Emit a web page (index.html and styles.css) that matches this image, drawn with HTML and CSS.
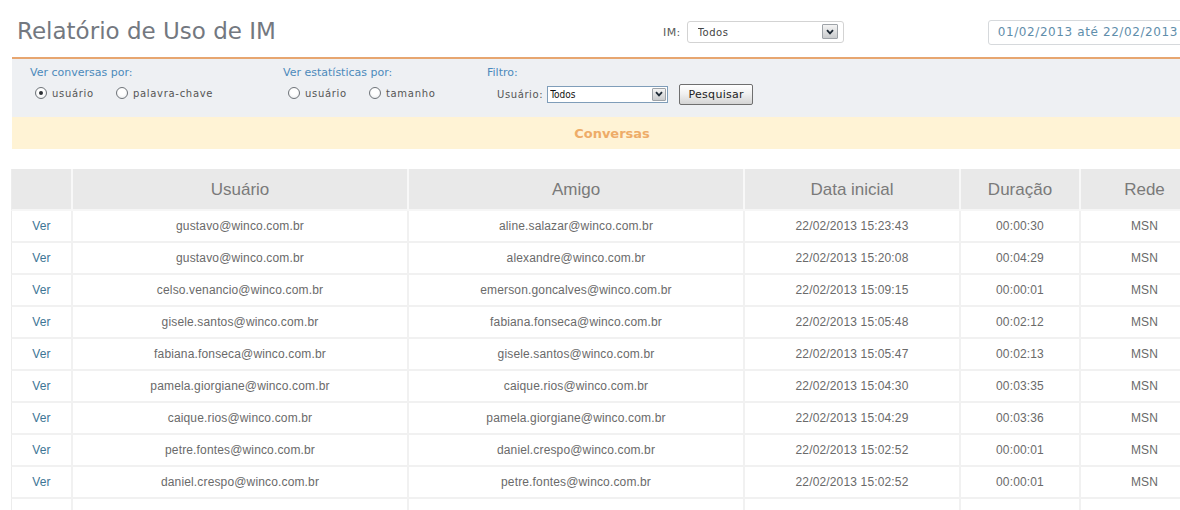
FILE: index.html
```html
<!DOCTYPE html>
<html lang="pt-BR">
<head>
<meta charset="utf-8">
<title>Relatório de Uso de IM</title>
<link rel="stylesheet" href="styles.css">
</head>
<body>
<div class="page">
  <header class="topbar">
    <h1 class="title">Relatório de Uso de IM</h1>
    <div class="im-field">
      <span class="im-label">IM:</span>
      <span class="select-wrap im-select">
        <select class="select"><option>Todos</option></select>
        <span class="select-arrow"><svg width="8" height="6" viewBox="0 0 8 6"><path d="M1 1.2 L4 4.4 L7 1.2" fill="none" stroke="#1e2a36" stroke-width="1.8"/></svg></span>
      </span>
    </div>
    <div class="date-range">01/02/2013 até 22/02/2013</div>
  </header>

  <section class="options">
    <div class="opt-group g-conv">
      <div class="opt-title">Ver conversas por:</div>
      <div class="radio-row">
        <span class="radio checked"></span><span class="radio-label">usuário</span>
        <span class="radio"></span><span class="radio-label">palavra-chave</span>
      </div>
    </div>
    <div class="opt-group g-stat">
      <div class="opt-title">Ver estatísticas por:</div>
      <div class="radio-row">
        <span class="radio"></span><span class="radio-label">usuário</span>
        <span class="radio"></span><span class="radio-label">tamanho</span>
      </div>
    </div>
    <div class="opt-group g-filter">
      <div class="opt-title">Filtro:</div>
      <div class="filter-row">
        <span class="filter-label">Usuário:</span>
        <span class="select-wrap user-select">
          <select class="select"><option>Todos</option></select>
          <span class="select-arrow"><svg width="8" height="6" viewBox="0 0 8 6"><path d="M1 1.2 L4 4.4 L7 1.2" fill="none" stroke="#1e2a36" stroke-width="1.8"/></svg></span>
        </span>
        <button class="btn" type="button">Pesquisar</button>
      </div>
    </div>
  </section>

  <div class="band">Conversas</div>

  <table class="grid">
    <thead>
      <tr>
        <th class="c1"></th>
        <th class="c2">Usuário</th>
        <th class="c3">Amigo</th>
        <th class="c4">Data inicial</th>
        <th class="c5">Duração</th>
        <th class="c6">Rede</th>
      </tr>
    </thead>
    <tbody>
      <tr><td><a class="ver">Ver</a></td><td>gustavo@winco.com.br</td><td>aline.salazar@winco.com.br</td><td>22/02/2013 15:23:43</td><td>00:00:30</td><td>MSN</td></tr>
      <tr><td><a class="ver">Ver</a></td><td>gustavo@winco.com.br</td><td>alexandre@winco.com.br</td><td>22/02/2013 15:20:08</td><td>00:04:29</td><td>MSN</td></tr>
      <tr><td><a class="ver">Ver</a></td><td>celso.venancio@winco.com.br</td><td>emerson.goncalves@winco.com.br</td><td>22/02/2013 15:09:15</td><td>00:00:01</td><td>MSN</td></tr>
      <tr><td><a class="ver">Ver</a></td><td>gisele.santos@winco.com.br</td><td>fabiana.fonseca@winco.com.br</td><td>22/02/2013 15:05:48</td><td>00:02:12</td><td>MSN</td></tr>
      <tr><td><a class="ver">Ver</a></td><td>fabiana.fonseca@winco.com.br</td><td>gisele.santos@winco.com.br</td><td>22/02/2013 15:05:47</td><td>00:02:13</td><td>MSN</td></tr>
      <tr><td><a class="ver">Ver</a></td><td>pamela.giorgiane@winco.com.br</td><td>caique.rios@winco.com.br</td><td>22/02/2013 15:04:30</td><td>00:03:35</td><td>MSN</td></tr>
      <tr><td><a class="ver">Ver</a></td><td>caique.rios@winco.com.br</td><td>pamela.giorgiane@winco.com.br</td><td>22/02/2013 15:04:29</td><td>00:03:36</td><td>MSN</td></tr>
      <tr><td><a class="ver">Ver</a></td><td>petre.fontes@winco.com.br</td><td>daniel.crespo@winco.com.br</td><td>22/02/2013 15:02:52</td><td>00:00:01</td><td>MSN</td></tr>
      <tr><td><a class="ver">Ver</a></td><td>daniel.crespo@winco.com.br</td><td>petre.fontes@winco.com.br</td><td>22/02/2013 15:02:52</td><td>00:00:01</td><td>MSN</td></tr>
      <tr><td></td><td></td><td></td><td></td><td></td><td></td></tr>
    </tbody>
  </table>
</div>
</body>
</html>
```

FILE: styles.css
```css
html, body {
  margin: 0;
  padding: 0;
  overflow: hidden;
  background: #ffffff;
}

body {
  font-family: "DejaVu Sans", Verdana, sans-serif;
  color: #555;
}

.page {
  margin-left: 12px;
}

/* ---------- top bar ---------- */
.topbar {
  display: flex;
  align-items: center;
  height: 50px;
  padding: 7px 0 0 5px;
  border-bottom: 2px solid #e7a670;
  white-space: nowrap;
}

.title {
  flex: 0 0 646px;
  margin: 0;
  font-size: 23px;
  font-weight: normal;
  color: #737880;
  padding-bottom: 2px;
}

.im-field {
  display: flex;
  align-items: center;
  gap: 6px;
}

.im-label {
  font-size: 11px;
  color: #5a5a5a;
  letter-spacing: 0.4px;
}

.select-wrap {
  position: relative;
  display: inline-block;
}

.select {
  appearance: none;
  -webkit-appearance: none;
  margin: 0;
  font-family: "DejaVu Sans", Verdana, sans-serif;
  background: #fff;
  color: #333;
  outline: none;
  display: block;
}

.im-select .select {
  width: 157px;
  height: 22px;
  border: 1px solid #d3d3d3;
  border-radius: 3px;
  padding: 0 0 0 10px;
  font-size: 10px;
  letter-spacing: 0.5px;
  color: #444;
}

.select-arrow {
  position: absolute;
  display: flex;
  align-items: center;
  justify-content: center;
  box-sizing: border-box;
  border: 1px solid #9ea3a8;
  border-radius: 1px;
  background: linear-gradient(#f4f4f4, #c9cbcd);
  pointer-events: none;
}

.im-select .select-arrow {
  right: 6px;
  top: 3px;
  width: 16px;
  height: 15px;
}

.date-range {
  margin-left: 144px;
  flex: 0 0 auto;
  width: 230px;
  height: 25px;
  box-sizing: border-box;
  border: 1px solid #d6d9dc;
  border-radius: 3px;
  padding-left: 9px;
  display: flex;
  align-items: center;
  font-size: 12px;
  letter-spacing: 0.6px;
  color: #5f8eab;
}

/* ---------- options panel ---------- */
.options {
  display: flex;
  align-items: flex-start;
  height: 58px;
  box-sizing: border-box;
  padding: 7px 0 0 18px;
  background: #eef0f3;
}

.opt-group {
  display: flex;
  flex-direction: column;
}

.g-conv { width: 253px; }
.g-stat { width: 204px; }

.opt-title {
  font-size: 11px;
  line-height: 14px;
  color: #4c8abb;
}

.radio-row {
  display: flex;
  align-items: center;
  margin-top: 6px;
  height: 14px;
  padding-left: 5px;
}

.radio {
  width: 12px;
  height: 12px;
  box-sizing: border-box;
  border: 1px solid #6e7378;
  border-radius: 50%;
  background: radial-gradient(circle at 50% 40%, #ffffff 40%, #e3e5e8 100%);
  display: inline-flex;
  align-items: center;
  justify-content: center;
  margin-right: 5px;
}

.radio.checked::after {
  content: "";
  width: 4px;
  height: 4px;
  border-radius: 50%;
  background: #2c3034;
}

.radio-label {
  font-size: 10px;
  letter-spacing: 0.7px;
  color: #555;
  margin-right: 22px;
}

.filter-row {
  display: flex;
  align-items: center;
  margin-top: 2px;
  height: 24px;
  padding-left: 10px;
}

.filter-label {
  font-size: 10px;
  letter-spacing: 0.6px;
  color: #555;
  margin-right: 4px;
}

.user-select .select {
  width: 121px;
  height: 17px;
  border: 1px solid #7f9db9;
  border-radius: 0;
  padding: 0 0 0 2px;
  font-family: "DejaVu Sans Condensed", "DejaVu Sans", sans-serif;
  font-size: 10px;
  color: #111;
}

.user-select .select-arrow {
  right: 2px;
  top: 2px;
  width: 14px;
  height: 13px;
}

.btn {
  margin-left: 11px;
  width: 74px;
  height: 21px;
  padding: 0;
  font-family: "DejaVu Sans", Verdana, sans-serif;
  font-size: 11px;
  letter-spacing: 0.3px;
  color: #222;
  border: 1px solid #6f6f6f;
  border-radius: 2px;
  background: linear-gradient(#ffffff, #f1f1f1 45%, #d4d4d4);
}

/* ---------- band ---------- */
.band {
  height: 32px;
  display: flex;
  align-items: center;
  justify-content: center;
  background: #fff3d5;
  font-size: 13px;
  font-weight: bold;
  color: #eeac68;
  padding-left: 32px;
  margin-bottom: 20px;
}

/* ---------- table ---------- */
.grid {
  margin-left: -1px;
  width: 1199px;
  table-layout: fixed;
  border-collapse: separate;
  border-spacing: 0;
  font-family: "Liberation Sans", Arial, sans-serif;
}

.grid th,
.grid td {
  box-sizing: border-box;
  text-align: center;
  padding: 0;
  border-right: 2px solid #f1f1f1;
  border-bottom: 2px solid #f1f1f1;
}

.grid th:first-child,
.grid td:first-child {
  border-left: 1px solid #ececec;
}

.grid th {
  height: 42px;
  background: #e9e9e9;
  border-right-color: #f8f8f8;
  border-bottom-color: #f6f6f6;
  font-size: 17px;
  font-weight: normal;
  color: #7a7a7a;
  padding-top: 2px;
}

.grid td {
  height: 32px;
  font-size: 12px;
  letter-spacing: 0.15px;
  color: #6a6a6a;
}

.c1 { width: 62px; }
.c2 { width: 336px; }
.c3 { width: 336px; }
.c4 { width: 216px; }
.c5 { width: 120px; }
.c6 { width: 129px; }

.ver {
  color: #3d7595;
  font-size: 12px;
  text-decoration: none;
}
```
